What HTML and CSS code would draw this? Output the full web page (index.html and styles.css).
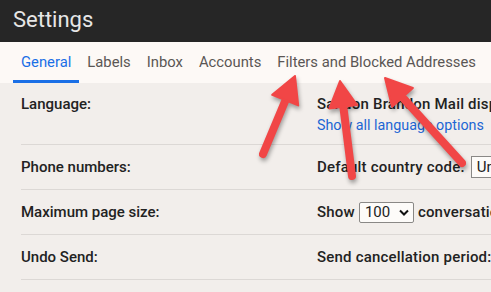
FILE: index.html
```html
<!DOCTYPE html>
<html lang="en">
<head>
    <meta charset="UTF-8">
    <meta name="viewport" content="width=device-width, initial-scale=1.0">
    <title>Settings</title>
    <link rel="stylesheet" href="styles.css">
</head>
<body>
    <div class="topbar">Settings</div>

    <div class="tabs">
        <a href="#" class="tab active">General</a>
        <a href="#" class="tab">Labels</a>
        <a href="#" class="tab">Inbox</a>
        <a href="#" class="tab">Accounts</a>
        <a href="#" class="tab">Filters and Blocked Addresses</a>
    </div>

    <div class="settings">
        <div class="row first">
            <div class="label">Language:</div>
            <div class="value">
                <div>Sandon Brandon Mail display language:</div>
                <a href="#" class="link">Show all language options</a>
            </div>
        </div>
        <div class="row">
            <div class="label">Phone numbers:</div>
            <div class="value">Default country code: <span class="box">United States</span></div>
        </div>
        <div class="row">
            <div class="label">Maximum page size:</div>
            <div class="value">Show
                <span class="select">100
                    <svg width="10" height="7" viewBox="0 0 10 7"><path d="M1 1.5 L5 5.5 L9 1.5" fill="none" stroke="#111" stroke-width="2"/></svg>
                </span>
                conversations per page</div>
        </div>
        <div class="row">
            <div class="label">Undo Send:</div>
            <div class="value">Send cancellation period: 5 seconds</div>
        </div>
    </div>

    <!-- annotation arrows -->
    <svg class="arrows" width="491" height="292" viewBox="0 0 491 292">
        <g fill="#f14646" stroke="#f14646" stroke-linecap="round" stroke-linejoin="round">
            <line x1="263" y1="154" x2="286" y2="99" stroke-width="8"/>
            <polygon points="295,76 298.2,105.4 272.2,94.8" stroke-width="2"/>
            <line x1="352" y1="176" x2="343" y2="104" stroke-width="8"/>
            <polygon points="340,81 357.1,105.1 329.3,108.5" stroke-width="2"/>
            <line x1="462" y1="163" x2="404" y2="99" stroke-width="8"/>
            <polygon points="385,78 412.9,87.9 392.1,106.7" stroke-width="2"/>
        </g>
    </svg>
</body>
</html>
```

FILE: styles.css
```css
body {
    font-family: Roboto, "Noto Sans", sans-serif;
    margin: 0;
    padding: 0;
    background-color: #f2eeeb;
    width: 491px;
    height: 292px;
    overflow: hidden;
    position: relative;
}
/* Header */
.topbar {
    background: #262626;
    color: #e6e6e6;
    height: 42px;
    padding-left: 13px;
    font-size: 22px;
    line-height: 40px;
}
/* Tabs */
.tabs {
    background: #fdf9f6;
    height: 41px;
    padding-left: 13px;
    display: flex;
    white-space: nowrap;
}
.tab {
    color: #5a5654;
    text-decoration: none;
    font-size: 14.8px;
    padding: 0 8px;
    line-height: 41px;
    box-sizing: border-box;
    height: 41px;
}
.tab.active {
    color: #1a6fe6;
    border-bottom: 3px solid #1a6fe6;
}
/* Settings rows */
.settings {
    padding-left: 21px;
    overflow: hidden;
}
.row {
    display: flex;
    align-items: center;
    height: 44px;
    border-bottom: 1px solid #dcd8d5;
    font-size: 15px;
    font-weight: 500;
    color: #222;
    white-space: nowrap;
}
.row.first {
    align-items: flex-start;
    height: 50px;
    padding-top: 11px;
    line-height: 21px;
}
.label {
    width: 296px;
    flex-shrink: 0;
}
.value {
    display: flex;
    align-items: center;
    gap: 4px;
    letter-spacing: 0.2px;
}
.row.first .value {
    display: block;
}
.link {
    color: #1c66d4;
    text-decoration: none;
    font-weight: 400;
    font-size: 14.3px;
    letter-spacing: 0;
}
.box {
    display: inline-block;
    border: 1px solid #8a8886;
    background: #fdfbf9;
    height: 20px;
    line-height: 20px;
    padding: 0 5px;
    font-weight: 400;
    margin-left: 2px;
}
.select {
    display: inline-flex;
    align-items: center;
    justify-content: space-between;
    box-sizing: border-box;
    width: 55px;
    height: 21px;
    border: 1px solid #8a8886;
    border-radius: 2px;
    background: #fdfbf9;
    padding: 0 4px 0 5px;
    font-weight: 400;
    letter-spacing: 0;
}
.arrows {
    position: absolute;
    top: 0;
    left: 0;
    filter: drop-shadow(1px 3px 2px rgba(0, 0, 0, 0.35));
}
```
